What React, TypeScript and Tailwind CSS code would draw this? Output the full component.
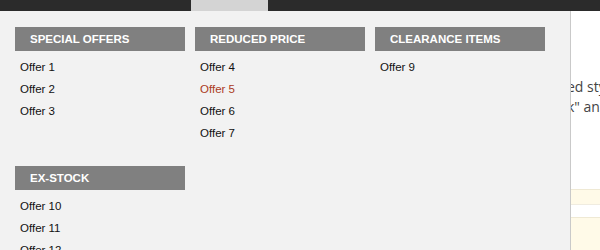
const columns = [
  { title: 'SPECIAL OFFERS', items: ['Offer 1', 'Offer 2', 'Offer 3'] },
  { title: 'REDUCED PRICE', items: ['Offer 4', 'Offer 5', 'Offer 6', 'Offer 7'] },
  { title: 'CLEARANCE ITEMS', items: ['Offer 9'] },
  { title: 'EX-STOCK', items: ['Offer 10', 'Offer 11', 'Offer 12'] },
];

function MenuColumn({ title, items }: { title: string; items: string[] }) {
  return (
    <div className="w-[180px]">
      <div className="w-[170px] h-[24px] bg-[#808080] pl-[15px] text-[11.5px] font-bold leading-[24px] text-white">
        {title}
      </div>
      <ul className="pt-[5px]">
        {items.map((item) => (
          <li
            key={item}
            className={`pl-[5px] text-[11.5px] leading-[22px] ${item === 'Offer 5' ? 'text-[#ac3a22]' : 'text-[#111]'}`}
          >
            {item}
          </li>
        ))}
      </ul>
    </div>
  );
}

export default function App() {
  return (
    <div className="relative w-[600px] h-[250px] overflow-hidden bg-white font-['Liberation_Sans',Arial,sans-serif]">
      {/* Top nav bar */}
      <div className="h-[11px] bg-[#2b2b2b] flex">
        <div className="ml-[191px] w-[77px] bg-[#d4d4d4]" />
      </div>

      {/* Page content behind the dropdown */}
      <div className="pl-[567px] pt-[66px] font-['Open_Sans',sans-serif] text-[14px] leading-[20px] text-[#444] whitespace-nowrap">
        <p>ed styles</p>
        <p>k" and</p>
      </div>
      <div className="mt-[72px] border-t border-[#efe9d4] h-[15px] bg-[#fffae8]" />
      <div className="border-t border-[#f0ece0] h-[13px] bg-white" />
      <div className="border-t border-[#efe9d4] h-[40px] bg-[#fffae8]" />

      {/* Dropdown panel */}
      <div className="absolute top-[11px] left-0 w-[571px] h-[260px] bg-[#f2f2f2] border-r border-[#c9c9c9] pt-[16px] pl-[15px]">
        <div className="grid grid-cols-[repeat(3,180px)] gap-y-[22px]">
          {columns.map((col) => (
            <MenuColumn key={col.title} title={col.title} items={col.items} />
          ))}
        </div>
      </div>
    </div>
  );
}
